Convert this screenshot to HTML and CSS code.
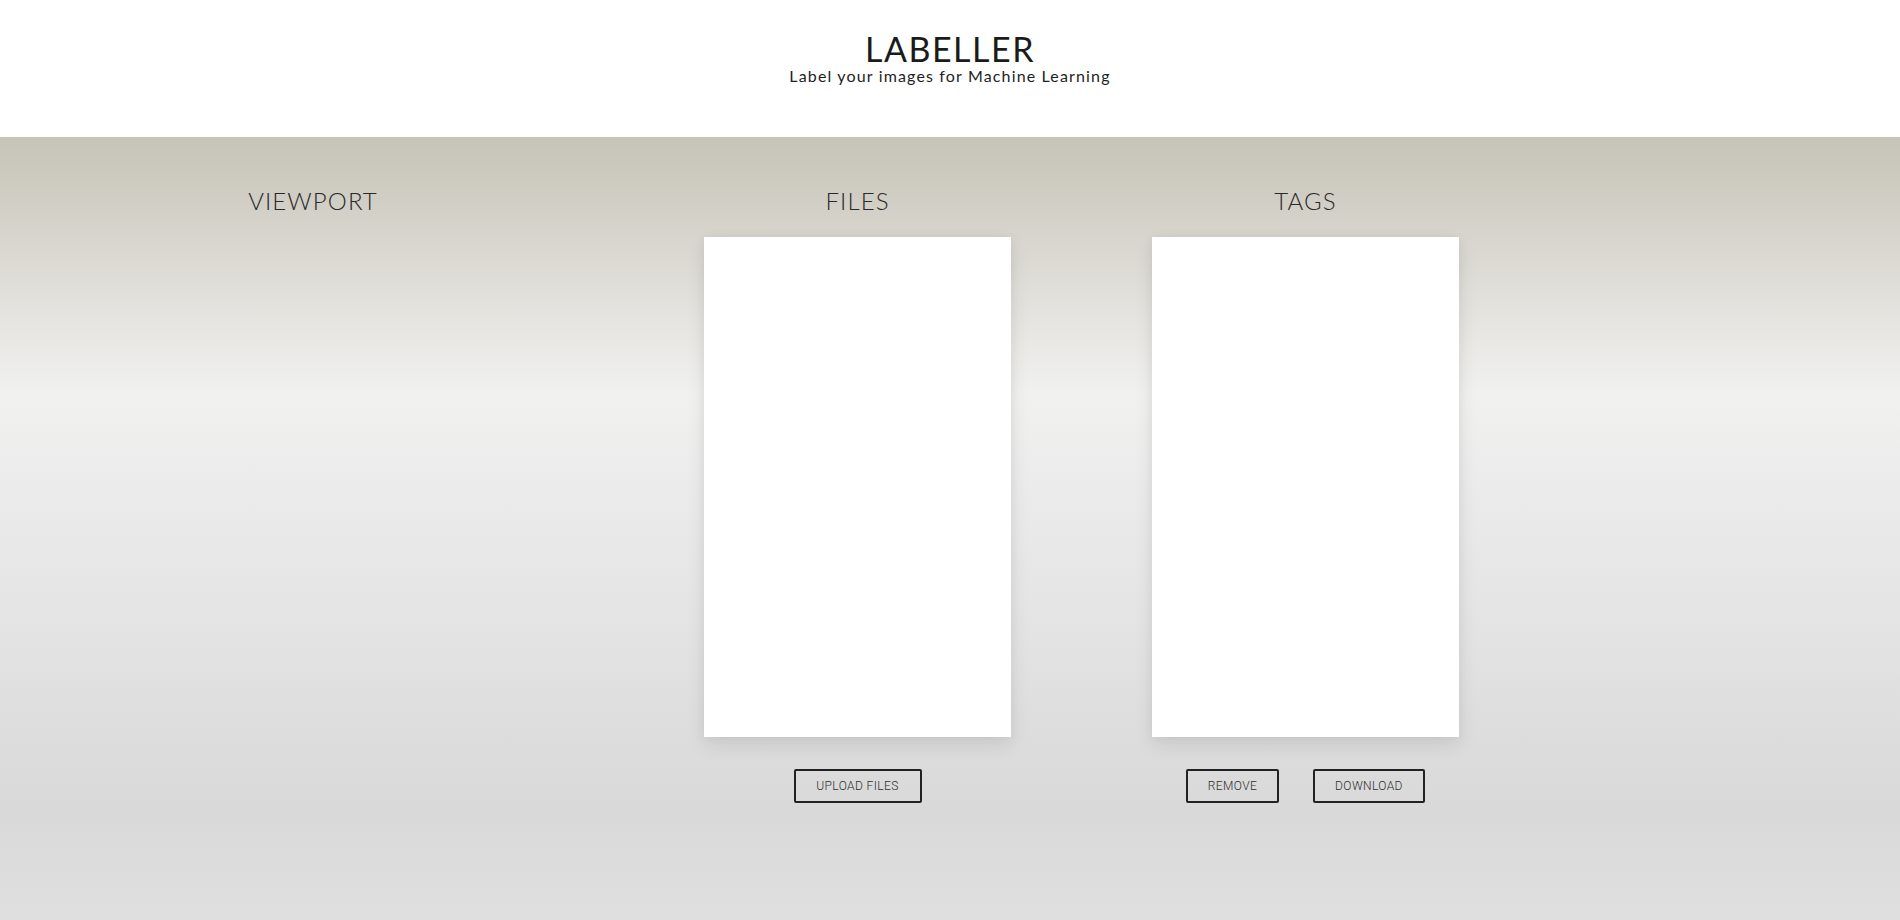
FILE: index.html
```html
<!DOCTYPE html>
<html lang="en">
<head>
<meta charset="utf-8">
<title>Labeller</title>
<link rel="stylesheet" href="styles.css">
</head>
<body>
<header class="top">
  <h1 class="title">LABELLER</h1>
  <p class="subtitle">Label your images for Machine Learning</p>
</header>
<main class="main">
  <section class="col col-viewport">
    <h2 class="heading">VIEWPORT</h2>
  </section>
  <section class="col col-files">
    <h2 class="heading">FILES</h2>
    <div class="panel"></div>
    <div class="actions">
      <button class="btn btn-upload">UPLOAD FILES</button>
    </div>
  </section>
  <section class="col col-tags">
    <h2 class="heading">TAGS</h2>
    <div class="panel"></div>
    <div class="actions">
      <button class="btn btn-remove">REMOVE</button>
      <button class="btn btn-download">DOWNLOAD</button>
    </div>
  </section>
</main>
</body>
</html>
```
FILE: styles.css
```css
* { box-sizing: border-box; }
html, body { margin: 0; padding: 0; }
body {
  font-family: "Lato", "Liberation Sans", sans-serif;
  color: #1e1e1e;
  background: #dfdfdf;
}
.top {
  height: 137px;
  background: #fff;
  display: flex;
  flex-direction: column;
  align-items: center;
  padding-top: 29px;
}
.title {
  margin: 0;
  font-size: 34px;
  font-weight: 400;
  line-height: 40px;
  letter-spacing: 1.5px;
  color: #1b1b1b;
}
.subtitle {
  margin: -3px 0 0;
  font-size: 16px;
  line-height: 20px;
  letter-spacing: 1.15px;
  color: #1e1e1e;
}
.main {
  height: 783px;
  display: flex;
  background: linear-gradient(to bottom,
    #c6c3b7 0%,
    #d3d1c8 10%,
    #e6e5e1 24%,
    #f1f1f0 33%,
    #ebebeb 45%,
    #e4e4e4 62%,
    #dddddd 76%,
    #d9d9d9 86%,
    #dfdfdf 100%);
}
.col {
  display: flex;
  flex-direction: column;
  align-items: center;
}
.col-viewport { width: 626px; }
.col-files { width: 463px; }
.col-tags { width: 433px; }
.heading {
  margin: 49px 0 0;
  height: 51px;
  font-size: 24px;
  line-height: 30px;
  font-weight: 300;
  letter-spacing: 1.1px;
  color: #2a2a2a;
}
.panel {
  width: 307px;
  height: 500px;
  background: #fff;
  box-shadow: 0 8px 18px rgba(0, 0, 0, 0.09), 0 0 10px rgba(0, 0, 0, 0.04);
}
.actions {
  margin-top: 32px;
  display: flex;
  gap: 34px;
}
.btn {
  height: 34px;
  padding: 0 14px;
  background: transparent;
  border: 2px solid #222;
  border-radius: 2px;
  font-family: "Roboto", "Liberation Sans", sans-serif;
  font-size: 12px;
  font-weight: 300;
  color: #2e2e2e;
  letter-spacing: 0.4px;
}
.btn-upload { width: 128px; }
.btn-remove { width: 93px; }
.btn-download { width: 112px; }
```
